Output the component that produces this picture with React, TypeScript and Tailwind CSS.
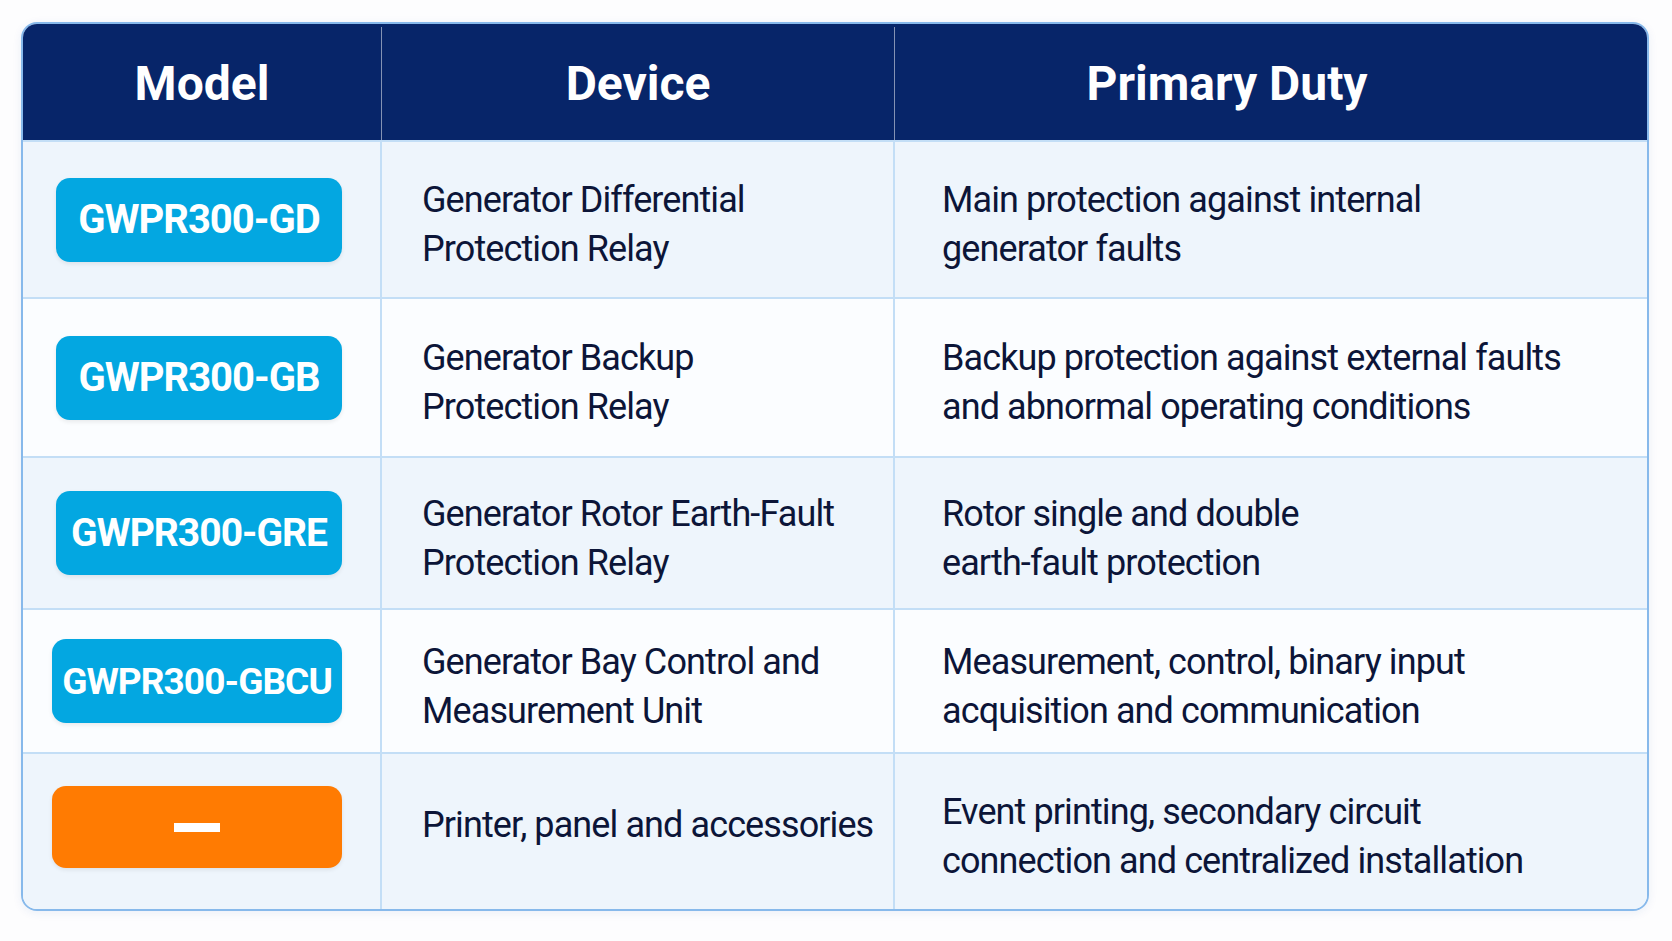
import React from 'react';

type Row = {
  model: string | null;
  size: string;
  device: string[];
  duty: string[];
  h: string;
  tinted: boolean;
};

const rows: Row[] = [
  {
    model: 'GWPR300-GD',
    size: 'text-[40px]',
    device: ['Generator Differential', 'Protection Relay'],
    duty: ['Main protection against internal', 'generator faults'],
    h: 'h-[157px]',
    tinted: true,
  },
  {
    model: 'GWPR300-GB',
    size: 'text-[40px]',
    device: ['Generator Backup', 'Protection Relay'],
    duty: ['Backup protection against external faults', 'and abnormal operating conditions'],
    h: 'h-[159px]',
    tinted: false,
  },
  {
    model: 'GWPR300-GRE',
    size: 'text-[39px]',
    device: ['Generator Rotor Earth-Fault', 'Protection Relay'],
    duty: ['Rotor single and double', 'earth-fault protection'],
    h: 'h-[152px]',
    tinted: true,
  },
  {
    model: 'GWPR300-GBCU',
    size: 'text-[37px]',
    device: ['Generator Bay Control and', 'Measurement Unit'],
    duty: ['Measurement, control, binary input', 'acquisition and communication'],
    h: 'h-[144px]',
    tinted: false,
  },
  {
    model: null,
    size: '',
    device: ['Printer, panel and accessories'],
    duty: ['Event printing, secondary circuit', 'connection and centralized installation'],
    h: 'h-[157px]',
    tinted: true,
  },
];

function ModelBadge({ model, size }: { model: string | null; size: string }) {
  if (!model) {
    // accessories row: orange pill with a dash
    return (
      <div className="mb-[9px] ml-[29px] flex h-[82px] w-[290px] items-center justify-center rounded-[14px] bg-[#ff7b02] shadow-[0_2px_4px_rgba(0,0,0,0.08)]">
        <div className="h-[9px] w-[46px] bg-white" />
      </div>
    );
  }
  const wide = model.length > 11;
  return (
    <div
      className={
        wide
          ? 'ml-[29px] flex h-[84px] w-[290px] items-center justify-center rounded-[14px] bg-[#03a7e1] shadow-[0_2px_4px_rgba(0,0,0,0.08)]'
          : 'ml-[33px] flex h-[84px] w-[286px] items-center justify-center rounded-[14px] bg-[#03a7e1] shadow-[0_2px_4px_rgba(0,0,0,0.08)]'
      }
    >
      <span className={'whitespace-nowrap font-bold leading-none tracking-tight text-white ' + size}>{model}</span>
    </div>
  );
}

export default function App() {
  return (
    <div className="min-h-[941px] w-full bg-[#fdfdfe] pl-[21px] pt-[22px] font-['Roboto',sans-serif]">
      <div className="w-[1628px] overflow-hidden rounded-[16px] border-2 border-[#87b9eb] shadow-[0_2px_10px_rgba(30,80,160,0.08)]">
        {/* header */}
        <div className="grid h-[116px] grid-cols-[359px_513px_1fr] bg-[#072569] pt-[3px] text-[48px] font-bold text-white">
          <div className="flex items-center justify-center border-r border-white/50">Model</div>
          <div className="flex items-center justify-center border-r border-white/50">Device</div>
          <div className="flex items-center justify-center pr-[88px]">Primary Duty</div>
        </div>

        {rows.map((r, i) => (
          <div
            key={i}
            className={
              'grid grid-cols-[359px_513px_1fr] border-t-2 border-[#c3def6] text-[36px] leading-[49px] tracking-tight text-[#0c1538] ' +
              r.h +
              ' ' +
              (r.tinted ? 'bg-[#eef5fc]' : 'bg-[#fbfdff]')
            }
          >
            <div className="flex items-center border-r-2 border-[#c3def6]">
              <ModelBadge model={r.model} size={r.size} />
            </div>
            <div
              className={
                r.device.length > 1
                  ? 'flex flex-col justify-center border-r-2 border-[#c3def6] pl-[40px] pt-[11px]'
                  : 'flex flex-col justify-center border-r-2 border-[#c3def6] pb-[12px] pl-[40px]'
              }
            >
              {r.device.map((t) => (
                <div key={t} className="whitespace-nowrap">{t}</div>
              ))}
            </div>
            <div className="flex flex-col justify-center pl-[47px] pt-[11px]">
              {r.duty.map((t) => (
                <div key={t} className="whitespace-nowrap">{t}</div>
              ))}
            </div>
          </div>
        ))}
      </div>
    </div>
  );
}
